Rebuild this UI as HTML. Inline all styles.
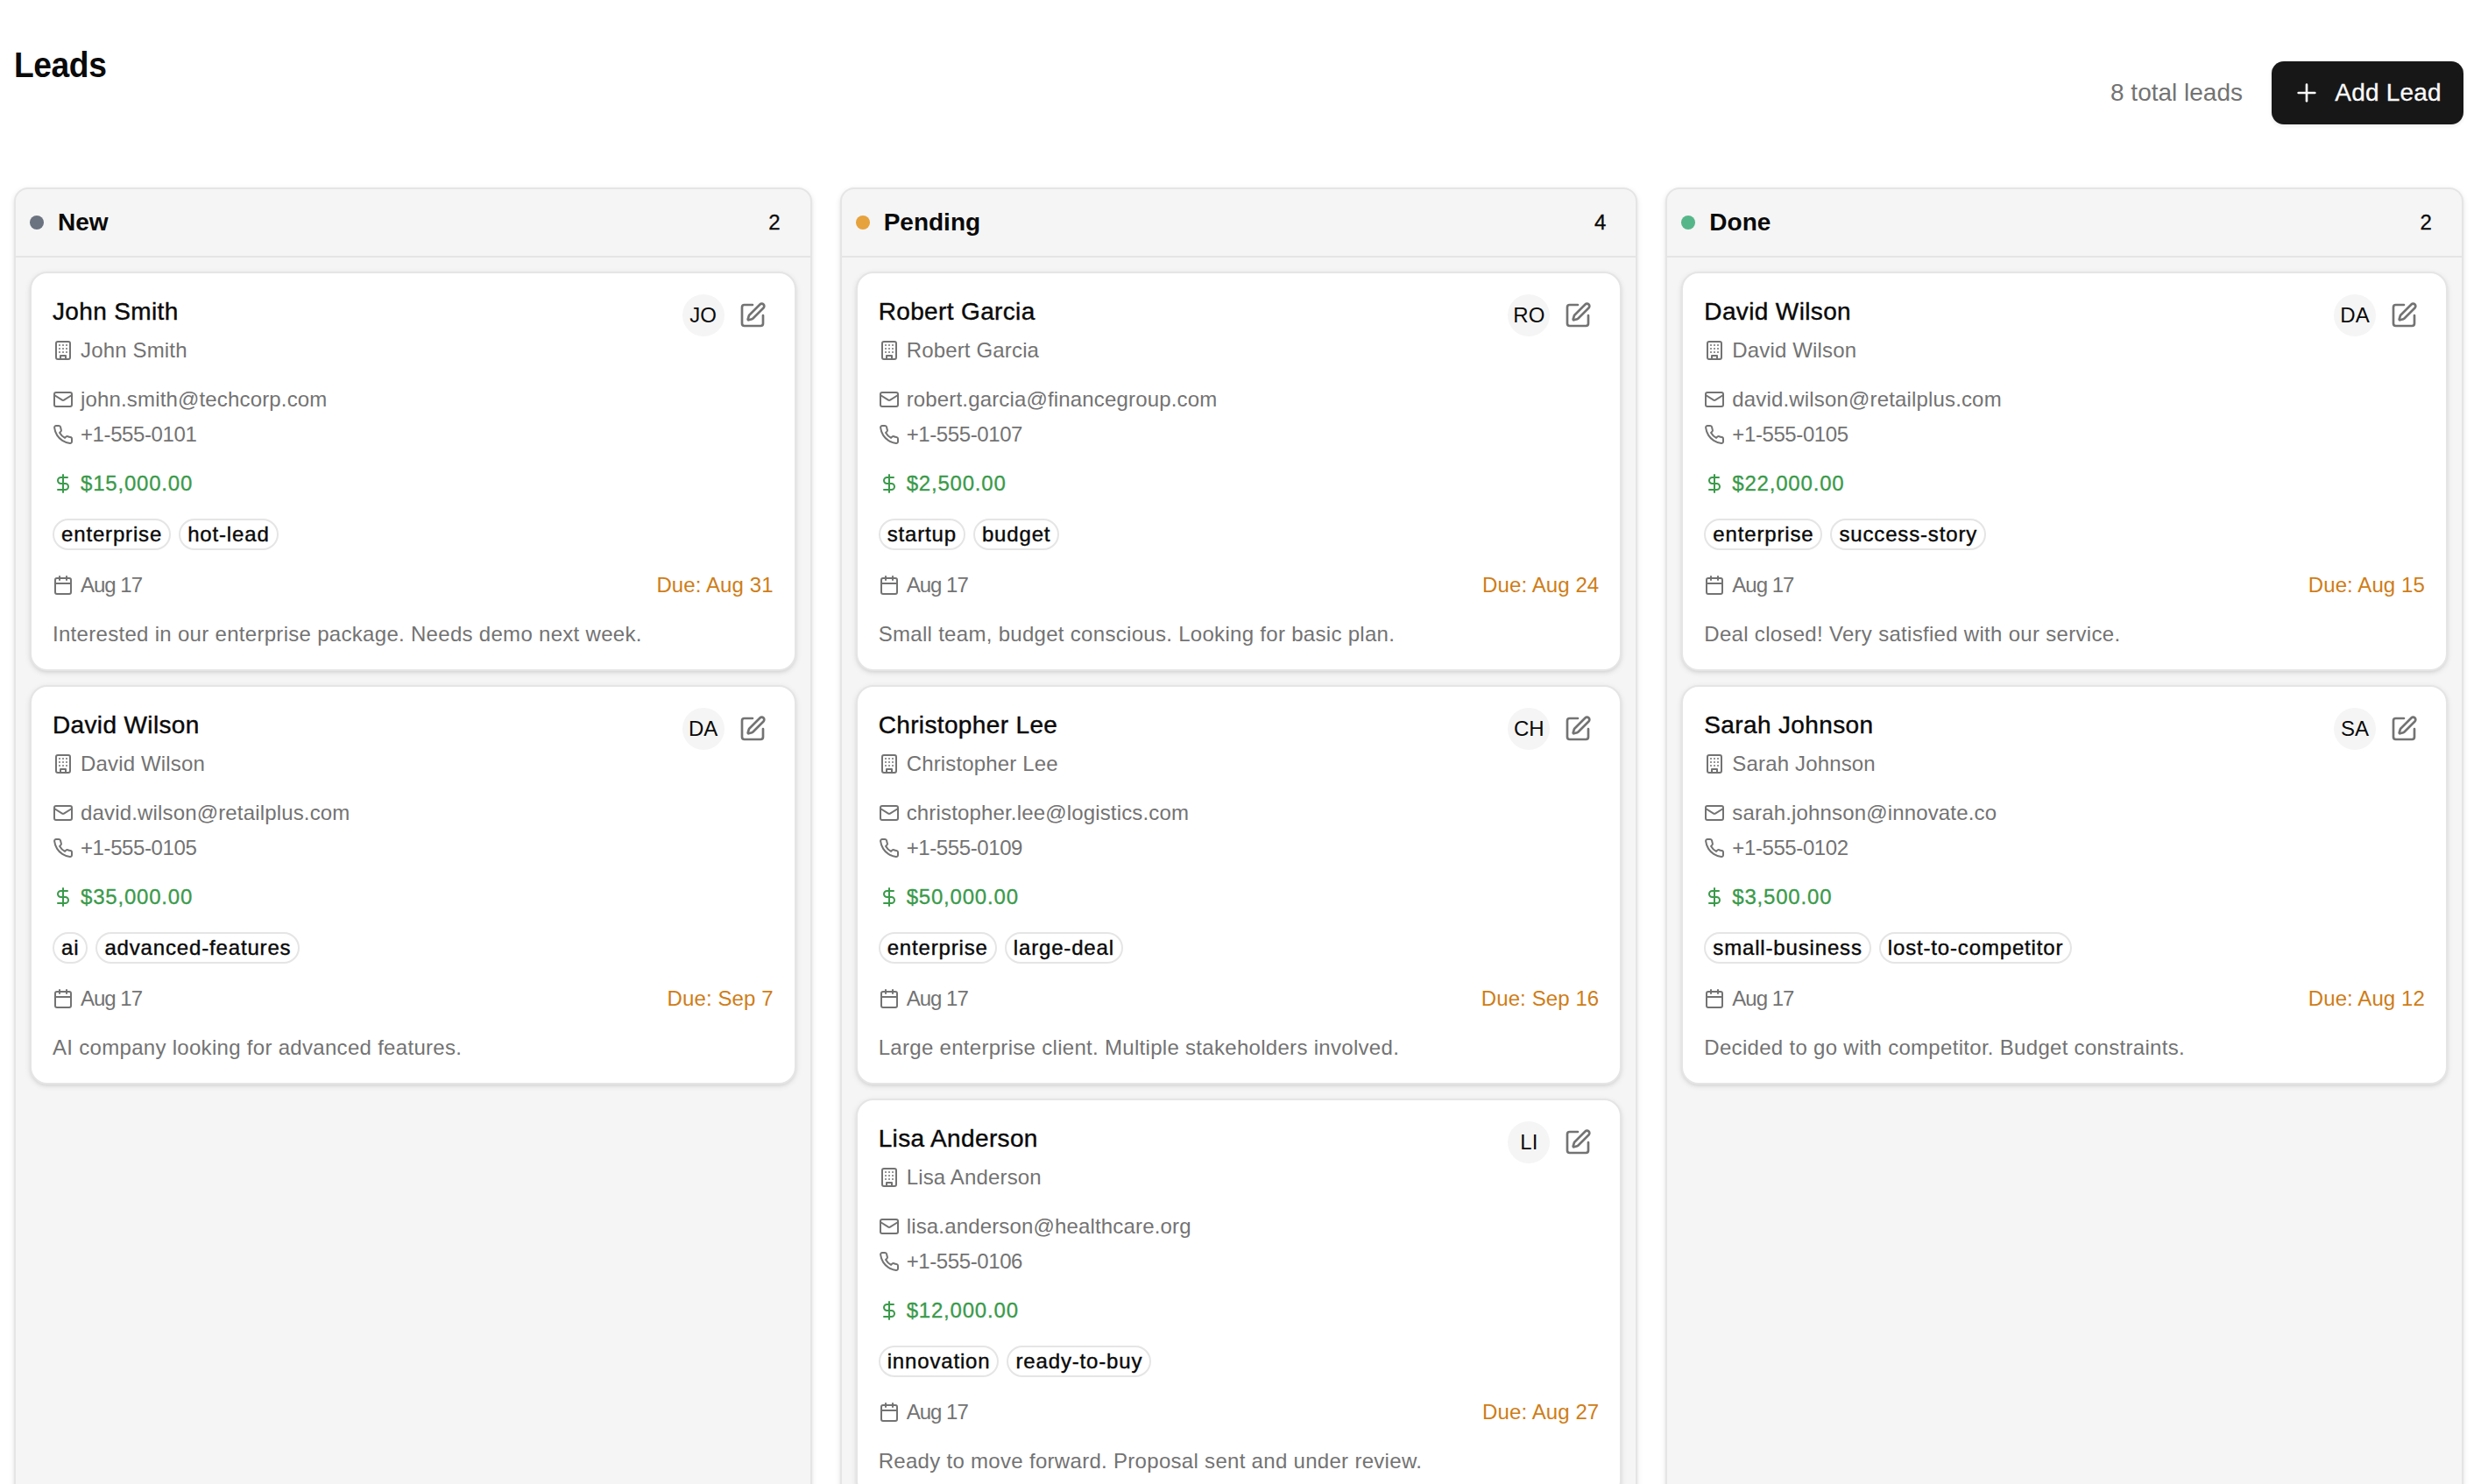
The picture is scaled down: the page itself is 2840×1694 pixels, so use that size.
<!DOCTYPE html>
<html><head><meta charset="utf-8"><title>Leads</title>
<style>
@media (min-width: 2000px) { html { zoom: 2; } }
html,body{margin:0;padding:0;background:#fff;}
body{width:1420px;height:847px;overflow:hidden;position:relative;font-family:"Liberation Sans",sans-serif;color:#0a0a0a;white-space:nowrap;}
.page{position:relative;width:1420px;height:847px;overflow:hidden;}
.title{position:absolute;left:8px;top:23px;margin:0;font-size:20px;line-height:28px;font-weight:700;letter-spacing:-0.22px;transform:scaleX(0.93);transform-origin:0 0;}
.total{position:absolute;right:140px;top:43px;font-size:14px;line-height:20px;color:#737373;}
.btn{position:absolute;left:1296.65px;top:35px;width:109.3px;height:36px;box-sizing:border-box;background:#171717;border-radius:7px;color:#fafafa;display:flex;align-items:center;padding:0 12px;font-size:14px;box-shadow:0 1px 2px rgba(0,0,0,.08);-webkit-text-stroke:0.15px #fafafa;letter-spacing:0.1px;white-space:nowrap;}
.btn .ip{width:16px;height:16px;margin-right:8px;-webkit-text-stroke:0;}
.cols{position:absolute;left:8px;top:107px;width:1398px;display:flex;gap:16px;}
.col{width:455.333px;height:900px;box-sizing:border-box;border:1px solid #e5e5e5;border-radius:8px;background:#f5f5f5;box-shadow:0 1px 3px 0 rgba(0,0,0,.1),0 1px 2px -1px rgba(0,0,0,.1);}
.ch{height:38px;border-bottom:1px solid #e5e5e5;position:relative;box-sizing:content-box;}
.dot{position:absolute;left:8px;top:15px;width:8px;height:8px;border-radius:50%;}
.ct{position:absolute;left:24px;top:9px;font-size:14px;line-height:20px;font-weight:700;}
.cn{position:absolute;right:17px;top:11px;font-size:12px;line-height:16px;-webkit-text-stroke:0.15px #0a0a0a;}
.cb{padding:8px;}
.card{position:relative;box-sizing:border-box;height:228px;margin-bottom:8px;background:#fff;border:1px solid #e5e5e5;border-radius:10px;padding:12px;box-shadow:0 1px 3px 0 rgba(0,0,0,.1),0 1px 2px -1px rgba(0,0,0,.1);}
.hd{height:24px;position:relative;}
.nm{position:absolute;left:0;top:0;font-size:14px;line-height:20px;letter-spacing:0.18px;-webkit-text-stroke:0.2px #0a0a0a;}
.av{position:absolute;right:28px;top:0;width:24px;height:24px;border-radius:50%;background:#f5f5f5;font-size:12px;line-height:24px;text-align:center;}
.eb{position:absolute;right:0;top:0;width:24px;height:24px;color:#737373;}
.ie{position:absolute;left:4px;top:4px;width:16px;height:16px;}
.row{display:flex;align-items:center;height:16px;font-size:12px;line-height:16px;color:#737373;position:relative;}
.ic{width:12px;height:12px;margin-right:4px;flex:none;}
.co{letter-spacing:0.08px;}
.em{margin-top:12px;letter-spacing:0.08px;}
.ph{margin-top:4px;letter-spacing:-0.2px;}
.amt{margin-top:12px;color:#3a9a4a;letter-spacing:0.4px;-webkit-text-stroke:0.15px #3a9a4a;}
.tags{margin-top:12px;display:flex;gap:4.5px;height:18px;}
.tag{box-sizing:border-box;height:18px;border:1px solid #e5e5e5;border-radius:9px;padding:0 4px;font-size:12px;line-height:16px;letter-spacing:0.42px;-webkit-text-stroke:0.2px #0a0a0a;}
.dt{margin-top:12px;}
.dt span:nth-of-type(1){letter-spacing:-0.5px;}
.due{position:absolute;right:0;top:0;color:#cf7d17;letter-spacing:0.05px;}
.nt{margin-top:12px;font-size:12px;line-height:16px;color:#737373;white-space:nowrap;letter-spacing:0.15px;}

</style></head><body>
<div class="page">
<h1 class="title">Leads</h1>
<div class="total">8 total leads</div>
<div class="btn"><svg class="ip" viewBox="0 0 24 24" fill="none" stroke="currentColor" stroke-width="2" stroke-linecap="round" stroke-linejoin="round"><path d="M5 12h14"/><path d="M12 5v14"/></svg><span>Add Lead</span></div>
<div class="cols"><div class="col">
<div class="ch"><span class="dot" style="background:#6b7280"></span><span class="ct">New</span><span class="cn">2</span></div>
<div class="cb"><div class="card">
<div class="hd"><div class="nm">John Smith</div><div class="av">JO</div><div class="eb"><svg class="ie" viewBox="0 0 24 24" fill="none" stroke="currentColor" stroke-width="2" stroke-linecap="round" stroke-linejoin="round"><path d="M12 3H5a2 2 0 0 0-2 2v14a2 2 0 0 0 2 2h14a2 2 0 0 0 2-2v-7"/><path d="M18.375 2.625a1 1 0 0 1 3 3l-9.013 9.014a2 2 0 0 1-.853.505l-2.873.84a.5.5 0 0 1-.62-.62l.84-2.873a2 2 0 0 1 .506-.852z"/></svg></div></div>
<div class="row co"><svg class="ic" viewBox="0 0 24 24" fill="none" stroke="currentColor" stroke-width="2" stroke-linecap="round" stroke-linejoin="round"><rect width="16" height="20" x="4" y="2" rx="2" ry="2"/><path d="M9 22v-4h6v4"/><path d="M8 6h.01"/><path d="M16 6h.01"/><path d="M12 6h.01"/><path d="M12 10h.01"/><path d="M12 14h.01"/><path d="M16 10h.01"/><path d="M16 14h.01"/><path d="M8 10h.01"/><path d="M8 14h.01"/></svg><span>John Smith</span></div>
<div class="row em"><svg class="ic" viewBox="0 0 24 24" fill="none" stroke="currentColor" stroke-width="2" stroke-linecap="round" stroke-linejoin="round"><rect width="20" height="16" x="2" y="4" rx="2"/><path d="m22 7-8.97 5.7a1.94 1.94 0 0 1-2.06 0L2 7"/></svg><span>john.smith@techcorp.com</span></div>
<div class="row ph"><svg class="ic" viewBox="0 0 24 24" fill="none" stroke="currentColor" stroke-width="2" stroke-linecap="round" stroke-linejoin="round"><path d="M22 16.92v3a2 2 0 0 1-2.18 2 19.79 19.79 0 0 1-8.63-3.07 19.5 19.5 0 0 1-6-6 19.79 19.79 0 0 1-3.07-8.67A2 2 0 0 1 4.11 2h3a2 2 0 0 1 2 1.72 12.84 12.84 0 0 0 .7 2.81 2 2 0 0 1-.45 2.11L8.09 9.91a16 16 0 0 0 6 6l1.27-1.27a2 2 0 0 1 2.11-.45 12.84 12.84 0 0 0 2.81.7A2 2 0 0 1 22 16.92z"/></svg><span>+1-555-0101</span></div>
<div class="row amt"><svg class="ic" viewBox="0 0 24 24" fill="none" stroke="currentColor" stroke-width="2" stroke-linecap="round" stroke-linejoin="round"><line x1="12" x2="12" y1="2" y2="22"/><path d="M17 5H9.5a3.5 3.5 0 0 0 0 7h5a3.5 3.5 0 0 1 0 7H6"/></svg><span>$15,000.00</span></div>
<div class="tags"><span class="tag">enterprise</span><span class="tag">hot-lead</span></div>
<div class="row dt"><svg class="ic" viewBox="0 0 24 24" fill="none" stroke="currentColor" stroke-width="2" stroke-linecap="round" stroke-linejoin="round"><path d="M8 2v4"/><path d="M16 2v4"/><rect width="18" height="18" x="3" y="4" rx="2"/><path d="M3 10h18"/></svg><span>Aug 17</span><span class="due">Due: Aug 31</span></div>
<div class="nt">Interested in our enterprise package. Needs demo next week.</div>
</div><div class="card">
<div class="hd"><div class="nm">David Wilson</div><div class="av">DA</div><div class="eb"><svg class="ie" viewBox="0 0 24 24" fill="none" stroke="currentColor" stroke-width="2" stroke-linecap="round" stroke-linejoin="round"><path d="M12 3H5a2 2 0 0 0-2 2v14a2 2 0 0 0 2 2h14a2 2 0 0 0 2-2v-7"/><path d="M18.375 2.625a1 1 0 0 1 3 3l-9.013 9.014a2 2 0 0 1-.853.505l-2.873.84a.5.5 0 0 1-.62-.62l.84-2.873a2 2 0 0 1 .506-.852z"/></svg></div></div>
<div class="row co"><svg class="ic" viewBox="0 0 24 24" fill="none" stroke="currentColor" stroke-width="2" stroke-linecap="round" stroke-linejoin="round"><rect width="16" height="20" x="4" y="2" rx="2" ry="2"/><path d="M9 22v-4h6v4"/><path d="M8 6h.01"/><path d="M16 6h.01"/><path d="M12 6h.01"/><path d="M12 10h.01"/><path d="M12 14h.01"/><path d="M16 10h.01"/><path d="M16 14h.01"/><path d="M8 10h.01"/><path d="M8 14h.01"/></svg><span>David Wilson</span></div>
<div class="row em"><svg class="ic" viewBox="0 0 24 24" fill="none" stroke="currentColor" stroke-width="2" stroke-linecap="round" stroke-linejoin="round"><rect width="20" height="16" x="2" y="4" rx="2"/><path d="m22 7-8.97 5.7a1.94 1.94 0 0 1-2.06 0L2 7"/></svg><span>david.wilson@retailplus.com</span></div>
<div class="row ph"><svg class="ic" viewBox="0 0 24 24" fill="none" stroke="currentColor" stroke-width="2" stroke-linecap="round" stroke-linejoin="round"><path d="M22 16.92v3a2 2 0 0 1-2.18 2 19.79 19.79 0 0 1-8.63-3.07 19.5 19.5 0 0 1-6-6 19.79 19.79 0 0 1-3.07-8.67A2 2 0 0 1 4.11 2h3a2 2 0 0 1 2 1.72 12.84 12.84 0 0 0 .7 2.81 2 2 0 0 1-.45 2.11L8.09 9.91a16 16 0 0 0 6 6l1.27-1.27a2 2 0 0 1 2.11-.45 12.84 12.84 0 0 0 2.81.7A2 2 0 0 1 22 16.92z"/></svg><span>+1-555-0105</span></div>
<div class="row amt"><svg class="ic" viewBox="0 0 24 24" fill="none" stroke="currentColor" stroke-width="2" stroke-linecap="round" stroke-linejoin="round"><line x1="12" x2="12" y1="2" y2="22"/><path d="M17 5H9.5a3.5 3.5 0 0 0 0 7h5a3.5 3.5 0 0 1 0 7H6"/></svg><span>$35,000.00</span></div>
<div class="tags"><span class="tag">ai</span><span class="tag">advanced-features</span></div>
<div class="row dt"><svg class="ic" viewBox="0 0 24 24" fill="none" stroke="currentColor" stroke-width="2" stroke-linecap="round" stroke-linejoin="round"><path d="M8 2v4"/><path d="M16 2v4"/><rect width="18" height="18" x="3" y="4" rx="2"/><path d="M3 10h18"/></svg><span>Aug 17</span><span class="due">Due: Sep 7</span></div>
<div class="nt">AI company looking for advanced features.</div>
</div></div>
</div><div class="col">
<div class="ch"><span class="dot" style="background:#e6a23c"></span><span class="ct">Pending</span><span class="cn">4</span></div>
<div class="cb"><div class="card">
<div class="hd"><div class="nm">Robert Garcia</div><div class="av">RO</div><div class="eb"><svg class="ie" viewBox="0 0 24 24" fill="none" stroke="currentColor" stroke-width="2" stroke-linecap="round" stroke-linejoin="round"><path d="M12 3H5a2 2 0 0 0-2 2v14a2 2 0 0 0 2 2h14a2 2 0 0 0 2-2v-7"/><path d="M18.375 2.625a1 1 0 0 1 3 3l-9.013 9.014a2 2 0 0 1-.853.505l-2.873.84a.5.5 0 0 1-.62-.62l.84-2.873a2 2 0 0 1 .506-.852z"/></svg></div></div>
<div class="row co"><svg class="ic" viewBox="0 0 24 24" fill="none" stroke="currentColor" stroke-width="2" stroke-linecap="round" stroke-linejoin="round"><rect width="16" height="20" x="4" y="2" rx="2" ry="2"/><path d="M9 22v-4h6v4"/><path d="M8 6h.01"/><path d="M16 6h.01"/><path d="M12 6h.01"/><path d="M12 10h.01"/><path d="M12 14h.01"/><path d="M16 10h.01"/><path d="M16 14h.01"/><path d="M8 10h.01"/><path d="M8 14h.01"/></svg><span>Robert Garcia</span></div>
<div class="row em"><svg class="ic" viewBox="0 0 24 24" fill="none" stroke="currentColor" stroke-width="2" stroke-linecap="round" stroke-linejoin="round"><rect width="20" height="16" x="2" y="4" rx="2"/><path d="m22 7-8.97 5.7a1.94 1.94 0 0 1-2.06 0L2 7"/></svg><span>robert.garcia@financegroup.com</span></div>
<div class="row ph"><svg class="ic" viewBox="0 0 24 24" fill="none" stroke="currentColor" stroke-width="2" stroke-linecap="round" stroke-linejoin="round"><path d="M22 16.92v3a2 2 0 0 1-2.18 2 19.79 19.79 0 0 1-8.63-3.07 19.5 19.5 0 0 1-6-6 19.79 19.79 0 0 1-3.07-8.67A2 2 0 0 1 4.11 2h3a2 2 0 0 1 2 1.72 12.84 12.84 0 0 0 .7 2.81 2 2 0 0 1-.45 2.11L8.09 9.91a16 16 0 0 0 6 6l1.27-1.27a2 2 0 0 1 2.11-.45 12.84 12.84 0 0 0 2.81.7A2 2 0 0 1 22 16.92z"/></svg><span>+1-555-0107</span></div>
<div class="row amt"><svg class="ic" viewBox="0 0 24 24" fill="none" stroke="currentColor" stroke-width="2" stroke-linecap="round" stroke-linejoin="round"><line x1="12" x2="12" y1="2" y2="22"/><path d="M17 5H9.5a3.5 3.5 0 0 0 0 7h5a3.5 3.5 0 0 1 0 7H6"/></svg><span>$2,500.00</span></div>
<div class="tags"><span class="tag">startup</span><span class="tag">budget</span></div>
<div class="row dt"><svg class="ic" viewBox="0 0 24 24" fill="none" stroke="currentColor" stroke-width="2" stroke-linecap="round" stroke-linejoin="round"><path d="M8 2v4"/><path d="M16 2v4"/><rect width="18" height="18" x="3" y="4" rx="2"/><path d="M3 10h18"/></svg><span>Aug 17</span><span class="due">Due: Aug 24</span></div>
<div class="nt">Small team, budget conscious. Looking for basic plan.</div>
</div><div class="card">
<div class="hd"><div class="nm">Christopher Lee</div><div class="av">CH</div><div class="eb"><svg class="ie" viewBox="0 0 24 24" fill="none" stroke="currentColor" stroke-width="2" stroke-linecap="round" stroke-linejoin="round"><path d="M12 3H5a2 2 0 0 0-2 2v14a2 2 0 0 0 2 2h14a2 2 0 0 0 2-2v-7"/><path d="M18.375 2.625a1 1 0 0 1 3 3l-9.013 9.014a2 2 0 0 1-.853.505l-2.873.84a.5.5 0 0 1-.62-.62l.84-2.873a2 2 0 0 1 .506-.852z"/></svg></div></div>
<div class="row co"><svg class="ic" viewBox="0 0 24 24" fill="none" stroke="currentColor" stroke-width="2" stroke-linecap="round" stroke-linejoin="round"><rect width="16" height="20" x="4" y="2" rx="2" ry="2"/><path d="M9 22v-4h6v4"/><path d="M8 6h.01"/><path d="M16 6h.01"/><path d="M12 6h.01"/><path d="M12 10h.01"/><path d="M12 14h.01"/><path d="M16 10h.01"/><path d="M16 14h.01"/><path d="M8 10h.01"/><path d="M8 14h.01"/></svg><span>Christopher Lee</span></div>
<div class="row em"><svg class="ic" viewBox="0 0 24 24" fill="none" stroke="currentColor" stroke-width="2" stroke-linecap="round" stroke-linejoin="round"><rect width="20" height="16" x="2" y="4" rx="2"/><path d="m22 7-8.97 5.7a1.94 1.94 0 0 1-2.06 0L2 7"/></svg><span>christopher.lee@logistics.com</span></div>
<div class="row ph"><svg class="ic" viewBox="0 0 24 24" fill="none" stroke="currentColor" stroke-width="2" stroke-linecap="round" stroke-linejoin="round"><path d="M22 16.92v3a2 2 0 0 1-2.18 2 19.79 19.79 0 0 1-8.63-3.07 19.5 19.5 0 0 1-6-6 19.79 19.79 0 0 1-3.07-8.67A2 2 0 0 1 4.11 2h3a2 2 0 0 1 2 1.72 12.84 12.84 0 0 0 .7 2.81 2 2 0 0 1-.45 2.11L8.09 9.91a16 16 0 0 0 6 6l1.27-1.27a2 2 0 0 1 2.11-.45 12.84 12.84 0 0 0 2.81.7A2 2 0 0 1 22 16.92z"/></svg><span>+1-555-0109</span></div>
<div class="row amt"><svg class="ic" viewBox="0 0 24 24" fill="none" stroke="currentColor" stroke-width="2" stroke-linecap="round" stroke-linejoin="round"><line x1="12" x2="12" y1="2" y2="22"/><path d="M17 5H9.5a3.5 3.5 0 0 0 0 7h5a3.5 3.5 0 0 1 0 7H6"/></svg><span>$50,000.00</span></div>
<div class="tags"><span class="tag">enterprise</span><span class="tag">large-deal</span></div>
<div class="row dt"><svg class="ic" viewBox="0 0 24 24" fill="none" stroke="currentColor" stroke-width="2" stroke-linecap="round" stroke-linejoin="round"><path d="M8 2v4"/><path d="M16 2v4"/><rect width="18" height="18" x="3" y="4" rx="2"/><path d="M3 10h18"/></svg><span>Aug 17</span><span class="due">Due: Sep 16</span></div>
<div class="nt">Large enterprise client. Multiple stakeholders involved.</div>
</div><div class="card">
<div class="hd"><div class="nm">Lisa Anderson</div><div class="av">LI</div><div class="eb"><svg class="ie" viewBox="0 0 24 24" fill="none" stroke="currentColor" stroke-width="2" stroke-linecap="round" stroke-linejoin="round"><path d="M12 3H5a2 2 0 0 0-2 2v14a2 2 0 0 0 2 2h14a2 2 0 0 0 2-2v-7"/><path d="M18.375 2.625a1 1 0 0 1 3 3l-9.013 9.014a2 2 0 0 1-.853.505l-2.873.84a.5.5 0 0 1-.62-.62l.84-2.873a2 2 0 0 1 .506-.852z"/></svg></div></div>
<div class="row co"><svg class="ic" viewBox="0 0 24 24" fill="none" stroke="currentColor" stroke-width="2" stroke-linecap="round" stroke-linejoin="round"><rect width="16" height="20" x="4" y="2" rx="2" ry="2"/><path d="M9 22v-4h6v4"/><path d="M8 6h.01"/><path d="M16 6h.01"/><path d="M12 6h.01"/><path d="M12 10h.01"/><path d="M12 14h.01"/><path d="M16 10h.01"/><path d="M16 14h.01"/><path d="M8 10h.01"/><path d="M8 14h.01"/></svg><span>Lisa Anderson</span></div>
<div class="row em"><svg class="ic" viewBox="0 0 24 24" fill="none" stroke="currentColor" stroke-width="2" stroke-linecap="round" stroke-linejoin="round"><rect width="20" height="16" x="2" y="4" rx="2"/><path d="m22 7-8.97 5.7a1.94 1.94 0 0 1-2.06 0L2 7"/></svg><span>lisa.anderson@healthcare.org</span></div>
<div class="row ph"><svg class="ic" viewBox="0 0 24 24" fill="none" stroke="currentColor" stroke-width="2" stroke-linecap="round" stroke-linejoin="round"><path d="M22 16.92v3a2 2 0 0 1-2.18 2 19.79 19.79 0 0 1-8.63-3.07 19.5 19.5 0 0 1-6-6 19.79 19.79 0 0 1-3.07-8.67A2 2 0 0 1 4.11 2h3a2 2 0 0 1 2 1.72 12.84 12.84 0 0 0 .7 2.81 2 2 0 0 1-.45 2.11L8.09 9.91a16 16 0 0 0 6 6l1.27-1.27a2 2 0 0 1 2.11-.45 12.84 12.84 0 0 0 2.81.7A2 2 0 0 1 22 16.92z"/></svg><span>+1-555-0106</span></div>
<div class="row amt"><svg class="ic" viewBox="0 0 24 24" fill="none" stroke="currentColor" stroke-width="2" stroke-linecap="round" stroke-linejoin="round"><line x1="12" x2="12" y1="2" y2="22"/><path d="M17 5H9.5a3.5 3.5 0 0 0 0 7h5a3.5 3.5 0 0 1 0 7H6"/></svg><span>$12,000.00</span></div>
<div class="tags"><span class="tag">innovation</span><span class="tag">ready-to-buy</span></div>
<div class="row dt"><svg class="ic" viewBox="0 0 24 24" fill="none" stroke="currentColor" stroke-width="2" stroke-linecap="round" stroke-linejoin="round"><path d="M8 2v4"/><path d="M16 2v4"/><rect width="18" height="18" x="3" y="4" rx="2"/><path d="M3 10h18"/></svg><span>Aug 17</span><span class="due">Due: Aug 27</span></div>
<div class="nt">Ready to move forward. Proposal sent and under review.</div>
</div></div>
</div><div class="col">
<div class="ch"><span class="dot" style="background:#55b789"></span><span class="ct">Done</span><span class="cn">2</span></div>
<div class="cb"><div class="card">
<div class="hd"><div class="nm">David Wilson</div><div class="av">DA</div><div class="eb"><svg class="ie" viewBox="0 0 24 24" fill="none" stroke="currentColor" stroke-width="2" stroke-linecap="round" stroke-linejoin="round"><path d="M12 3H5a2 2 0 0 0-2 2v14a2 2 0 0 0 2 2h14a2 2 0 0 0 2-2v-7"/><path d="M18.375 2.625a1 1 0 0 1 3 3l-9.013 9.014a2 2 0 0 1-.853.505l-2.873.84a.5.5 0 0 1-.62-.62l.84-2.873a2 2 0 0 1 .506-.852z"/></svg></div></div>
<div class="row co"><svg class="ic" viewBox="0 0 24 24" fill="none" stroke="currentColor" stroke-width="2" stroke-linecap="round" stroke-linejoin="round"><rect width="16" height="20" x="4" y="2" rx="2" ry="2"/><path d="M9 22v-4h6v4"/><path d="M8 6h.01"/><path d="M16 6h.01"/><path d="M12 6h.01"/><path d="M12 10h.01"/><path d="M12 14h.01"/><path d="M16 10h.01"/><path d="M16 14h.01"/><path d="M8 10h.01"/><path d="M8 14h.01"/></svg><span>David Wilson</span></div>
<div class="row em"><svg class="ic" viewBox="0 0 24 24" fill="none" stroke="currentColor" stroke-width="2" stroke-linecap="round" stroke-linejoin="round"><rect width="20" height="16" x="2" y="4" rx="2"/><path d="m22 7-8.97 5.7a1.94 1.94 0 0 1-2.06 0L2 7"/></svg><span>david.wilson@retailplus.com</span></div>
<div class="row ph"><svg class="ic" viewBox="0 0 24 24" fill="none" stroke="currentColor" stroke-width="2" stroke-linecap="round" stroke-linejoin="round"><path d="M22 16.92v3a2 2 0 0 1-2.18 2 19.79 19.79 0 0 1-8.63-3.07 19.5 19.5 0 0 1-6-6 19.79 19.79 0 0 1-3.07-8.67A2 2 0 0 1 4.11 2h3a2 2 0 0 1 2 1.72 12.84 12.84 0 0 0 .7 2.81 2 2 0 0 1-.45 2.11L8.09 9.91a16 16 0 0 0 6 6l1.27-1.27a2 2 0 0 1 2.11-.45 12.84 12.84 0 0 0 2.81.7A2 2 0 0 1 22 16.92z"/></svg><span>+1-555-0105</span></div>
<div class="row amt"><svg class="ic" viewBox="0 0 24 24" fill="none" stroke="currentColor" stroke-width="2" stroke-linecap="round" stroke-linejoin="round"><line x1="12" x2="12" y1="2" y2="22"/><path d="M17 5H9.5a3.5 3.5 0 0 0 0 7h5a3.5 3.5 0 0 1 0 7H6"/></svg><span>$22,000.00</span></div>
<div class="tags"><span class="tag">enterprise</span><span class="tag">success-story</span></div>
<div class="row dt"><svg class="ic" viewBox="0 0 24 24" fill="none" stroke="currentColor" stroke-width="2" stroke-linecap="round" stroke-linejoin="round"><path d="M8 2v4"/><path d="M16 2v4"/><rect width="18" height="18" x="3" y="4" rx="2"/><path d="M3 10h18"/></svg><span>Aug 17</span><span class="due">Due: Aug 15</span></div>
<div class="nt">Deal closed! Very satisfied with our service.</div>
</div><div class="card">
<div class="hd"><div class="nm">Sarah Johnson</div><div class="av">SA</div><div class="eb"><svg class="ie" viewBox="0 0 24 24" fill="none" stroke="currentColor" stroke-width="2" stroke-linecap="round" stroke-linejoin="round"><path d="M12 3H5a2 2 0 0 0-2 2v14a2 2 0 0 0 2 2h14a2 2 0 0 0 2-2v-7"/><path d="M18.375 2.625a1 1 0 0 1 3 3l-9.013 9.014a2 2 0 0 1-.853.505l-2.873.84a.5.5 0 0 1-.62-.62l.84-2.873a2 2 0 0 1 .506-.852z"/></svg></div></div>
<div class="row co"><svg class="ic" viewBox="0 0 24 24" fill="none" stroke="currentColor" stroke-width="2" stroke-linecap="round" stroke-linejoin="round"><rect width="16" height="20" x="4" y="2" rx="2" ry="2"/><path d="M9 22v-4h6v4"/><path d="M8 6h.01"/><path d="M16 6h.01"/><path d="M12 6h.01"/><path d="M12 10h.01"/><path d="M12 14h.01"/><path d="M16 10h.01"/><path d="M16 14h.01"/><path d="M8 10h.01"/><path d="M8 14h.01"/></svg><span>Sarah Johnson</span></div>
<div class="row em"><svg class="ic" viewBox="0 0 24 24" fill="none" stroke="currentColor" stroke-width="2" stroke-linecap="round" stroke-linejoin="round"><rect width="20" height="16" x="2" y="4" rx="2"/><path d="m22 7-8.97 5.7a1.94 1.94 0 0 1-2.06 0L2 7"/></svg><span>sarah.johnson@innovate.co</span></div>
<div class="row ph"><svg class="ic" viewBox="0 0 24 24" fill="none" stroke="currentColor" stroke-width="2" stroke-linecap="round" stroke-linejoin="round"><path d="M22 16.92v3a2 2 0 0 1-2.18 2 19.79 19.79 0 0 1-8.63-3.07 19.5 19.5 0 0 1-6-6 19.79 19.79 0 0 1-3.07-8.67A2 2 0 0 1 4.11 2h3a2 2 0 0 1 2 1.72 12.84 12.84 0 0 0 .7 2.81 2 2 0 0 1-.45 2.11L8.09 9.91a16 16 0 0 0 6 6l1.27-1.27a2 2 0 0 1 2.11-.45 12.84 12.84 0 0 0 2.81.7A2 2 0 0 1 22 16.92z"/></svg><span>+1-555-0102</span></div>
<div class="row amt"><svg class="ic" viewBox="0 0 24 24" fill="none" stroke="currentColor" stroke-width="2" stroke-linecap="round" stroke-linejoin="round"><line x1="12" x2="12" y1="2" y2="22"/><path d="M17 5H9.5a3.5 3.5 0 0 0 0 7h5a3.5 3.5 0 0 1 0 7H6"/></svg><span>$3,500.00</span></div>
<div class="tags"><span class="tag">small-business</span><span class="tag">lost-to-competitor</span></div>
<div class="row dt"><svg class="ic" viewBox="0 0 24 24" fill="none" stroke="currentColor" stroke-width="2" stroke-linecap="round" stroke-linejoin="round"><path d="M8 2v4"/><path d="M16 2v4"/><rect width="18" height="18" x="3" y="4" rx="2"/><path d="M3 10h18"/></svg><span>Aug 17</span><span class="due">Due: Aug 12</span></div>
<div class="nt">Decided to go with competitor. Budget constraints.</div>
</div></div>
</div></div>
</div>
</body></html>
